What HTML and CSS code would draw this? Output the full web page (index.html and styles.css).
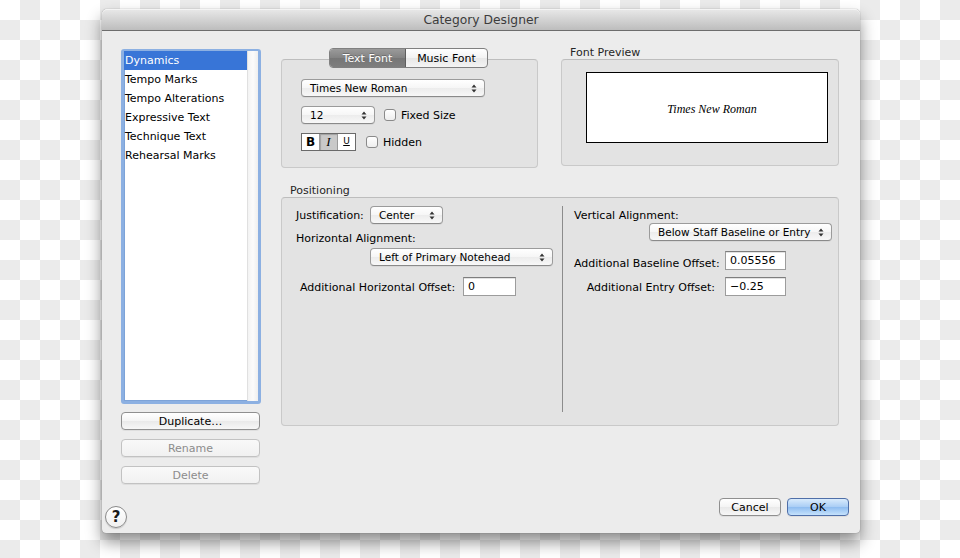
FILE: index.html
```html
<!DOCTYPE html>
<html>
<head>
<meta charset="utf-8">
<title>Category Designer</title>
<link rel="stylesheet" href="styles.css">
</head>
<body>
<div class="window">
  <div class="titlebar">Category Designer</div>
  <div class="content">
    <div class="leftcol">
      <div class="list">
        <div class="rows">
          <div class="row sel">Dynamics</div>
          <div class="row">Tempo Marks</div>
          <div class="row">Tempo Alterations</div>
          <div class="row">Expressive Text</div>
          <div class="row">Technique Text</div>
          <div class="row">Rehearsal Marks</div>
        </div>
        <div class="scroll"></div>
      </div>
      <div class="btn side">Duplicate…</div>
      <div class="btn side disabled">Rename</div>
      <div class="btn side disabled">Delete</div>
    </div>
    <div class="rightcol">
      <div class="toprow">
        <div class="textgrp">
          <div class="tabs"><span class="tab on">Text Font</span><span class="tab">Music Font</span></div>
          <div class="box textbox">
            <div class="ctl-row">
              <div class="popup w-font"><span class="ptxt">Times New Roman</span><svg class="arr" width="6" height="9" viewBox="0 0 6 9"><path d="M3 0.5 L5.5 3.5 H0.5 Z M3 8.5 L5.5 5.5 H0.5 Z" fill="#333"/></svg></div>
            </div>
            <div class="ctl-row">
              <div class="popup w-size"><span class="ptxt">12</span><svg class="arr" width="6" height="9" viewBox="0 0 6 9"><path d="M3 0.5 L5.5 3.5 H0.5 Z M3 8.5 L5.5 5.5 H0.5 Z" fill="#333"/></svg></div>
              <div class="check gap9"><span class="cb"></span><span class="ctxt">Fixed Size</span></div>
            </div>
            <div class="ctl-row">
              <div class="biu"><span class="seg b">B</span><span class="seg i on">I</span><span class="seg u">U</span></div>
              <div class="check gap10"><span class="cb"></span><span class="ctxt">Hidden</span></div>
            </div>
          </div>
        </div>
        <div class="prevgrp">
          <div class="grplabel">Font Preview</div>
          <div class="box prevbox">
            <div class="preview">Times New Roman</div>
          </div>
        </div>
      </div>
      <div class="posgrp">
        <div class="grplabel">Positioning</div>
        <div class="box posbox">
          <div class="pos-left">
            <div class="prow r-just">
              <span class="lbl just-lbl">Justification:</span>
              <div class="popup w-just"><span class="ptxt">Center</span><svg class="arr" width="6" height="9" viewBox="0 0 6 9"><path d="M3 0.5 L5.5 3.5 H0.5 Z M3 8.5 L5.5 5.5 H0.5 Z" fill="#333"/></svg></div>
            </div>
            <div class="lbl r-halign">Horizontal Alignment:</div>
            <div class="popup w-wide r-hpop"><span class="ptxt">Left of Primary Notehead</span><svg class="arr" width="6" height="9" viewBox="0 0 6 9"><path d="M3 0.5 L5.5 3.5 H0.5 Z M3 8.5 L5.5 5.5 H0.5 Z" fill="#333"/></svg></div>
            <div class="prow r-hoff">
              <span class="lbl hoff-lbl">Additional Horizontal Offset:</span>
              <div class="field w-hoff">0</div>
            </div>
          </div>
          <div class="divider"></div>
          <div class="pos-right">
            <div class="lbl">Vertical Alignment:</div>
            <div class="popup w-wide r-vpop"><span class="ptxt">Below Staff Baseline or Entry</span><svg class="arr" width="6" height="9" viewBox="0 0 6 9"><path d="M3 0.5 L5.5 3.5 H0.5 Z M3 8.5 L5.5 5.5 H0.5 Z" fill="#333"/></svg></div>
            <div class="prow r-base">
              <span class="lbl voff-lbl base-lbl">Additional Baseline Offset:</span>
              <div class="field w-voff">0.05556</div>
            </div>
            <div class="prow r-entry">
              <span class="lbl voff-lbl">Additional Entry Offset:</span>
              <div class="field w-voff">&minus;0.25</div>
            </div>
          </div>
        </div>
      </div>
    </div>
  </div>
  <div class="footer">
    <div class="help">?</div>
    <div class="actions">
      <div class="btn foot">Cancel</div>
      <div class="btn foot ok">OK</div>
    </div>
  </div>
</div>
</body>
</html>
```

FILE: styles.css
```css
html, body {
  margin: 0;
  padding: 0;
}
body {
  width: 960px;
  height: 558px;
  overflow: hidden;
  background: repeating-conic-gradient(#ebebeb 0 25%, #ffffff 0 50%) 0 0 / 40px 40px;
  font-family: "DejaVu Sans", "Noto Sans", sans-serif;
  font-size: 11px;
  color: #000;
}
.window {
  width: 758px;
  height: 524px;
  margin: 9px 0 0 102px;
  background: #ececec;
  border-radius: 5px 5px 4px 4px;
  box-shadow: 0 9px 16px rgba(0,0,0,0.45), 0 0 1px rgba(0,0,0,0.5);
  display: flex;
  flex-direction: column;
  overflow: hidden;
}
.titlebar {
  height: 21px;
  line-height: 23px;
  text-align: center;
  font-size: 12.3px;
  color: #3c3c3c;
  background: linear-gradient(#e9e9e9, #d3d3d3 50%, #bdbdbd);
  border-bottom: 1px solid #6d6d6d;
  box-shadow: inset 0 1px 0 #f4f4f4;
  border-radius: 5px 5px 0 0;
}
.content {
  flex: 1;
  display: flex;
  gap: 20px;
  padding: 0 21px 0 19px;
}
.leftcol {
  width: 140px;
  padding-top: 18px;
  display: flex;
  flex-direction: column;
}
.list {
  height: 350px;
  border: 3px solid #8cb0e2;
  border-top-width: 2px;
  border-radius: 3px;
  background: #fff;
  display: flex;
  box-shadow: inset 0 0 0 1px #7da3d8;
}
.rows {
  flex: 1;
}
.row {
  height: 19px;
  line-height: 19px;
  padding-left: 1px;
  white-space: nowrap;
}
.row.sel {
  background: #3875d7;
  color: #fff;
}
.scroll {
  width: 10px;
  border-left: 1px solid #e0e0e0;
  background: linear-gradient(90deg, #f3f3f3, #fbfbfb 50%, #eeeeee);
}
.btn {
  box-sizing: border-box;
  height: 18px;
  line-height: 18px;
  text-align: center;
  border: 1px solid #8f8f8f;
  border-radius: 4px;
  background: linear-gradient(#ffffff, #f4f4f4 50%, #e9e9e9 51%, #f7f7f7);
  box-shadow: 0 1px 0 rgba(0,0,0,0.06);
}
.btn.side {
  width: 139px;
  margin-top: 9px;
}
.list + .btn.side {
  margin-top: 8px;
}
.btn.disabled {
  color: #8c8c8c;
  border-color: #c2c2c2;
  background: linear-gradient(#f9f9f9, #f1f1f1);
}
.rightcol {
  width: 558px;
  padding-top: 17px;
}
.toprow {
  display: flex;
  gap: 23px;
  align-items: flex-start;
}
.textgrp {
  width: 257px;
  display: flex;
  flex-direction: column;
}
.tabs {
  align-self: center;
  margin-left: -2px;
  position: relative;
  z-index: 1;
  display: flex;
  height: 20px;
  box-sizing: border-box;
  border: 1px solid #808080;
  border-radius: 4px;
  overflow: hidden;
  margin-bottom: -9px;
  background: linear-gradient(#ffffff, #f2f2f2 50%, #e7e7e7 51%, #f4f4f4);
}
.tab {
  line-height: 20px;
  text-align: center;
  width: 81px;
}
.tab.on {
  width: 75px;
  color: #fff;
  background: linear-gradient(#9a9a9a, #838383 50%, #767676 51%, #7e7e7e);
  border-right: 1px solid #5e5e5e;
  text-shadow: 0 -1px 0 rgba(0,0,0,0.25);
}
.box {
  box-sizing: border-box;
  background: #e3e3e3;
  border: 1px solid #c9c9c9;
  border-top-color: #bdbdbd;
  border-radius: 4px;
}
.textbox {
  height: 109px;
  padding: 19px 0 0 19px;
}
.ctl-row {
  display: flex;
  align-items: center;
  height: 18px;
  margin-bottom: 9px;
}
.popup {
  box-sizing: border-box;
  height: 18px;
  padding-left: 8px;
  border: 1px solid #9b9b9b;
  border-bottom-color: #8a8a8a;
  border-radius: 4px;
  background: linear-gradient(#ffffff, #f6f6f6 50%, #ececec 51%, #f8f8f8);
  box-shadow: 0 1px 0 rgba(0,0,0,0.05);
  display: flex;
  align-items: center;
  white-space: nowrap;
  font-size: 10.5px;
}
.ptxt {
  line-height: 13px;
  padding-top: 1px;
}
.popup .arr {
  margin-left: auto;
  margin-right: 7px;
}
.w-font { width: 184px; }
.w-size { width: 74px; }
.w-just { width: 73px; }
.w-wide { width: 183px; }
.check {
  display: flex;
  align-items: center;
}
.ctxt {
  padding-top: 1px;
}
.gap9 { margin-left: 9px; }
.gap10 { margin-left: 10px; }
.cb {
  width: 12px;
  height: 12px;
  box-sizing: border-box;
  border: 1px solid #8a8a8a;
  border-radius: 3px;
  background: linear-gradient(#ffffff, #eeeeee);
  margin-right: 5px;
}
.biu {
  display: flex;
  height: 18px;
  box-sizing: border-box;
  border: 1px solid #6a6a6a;
  background: #fff;
}
.seg {
  width: 17px;
  text-align: center;
  line-height: 16px;
  border-right: 1px solid #9a9a9a;
}
.seg:last-child { border-right: 0; }
.seg.b {
  font-weight: bold;
  font-size: 12px;
}
.seg.i {
  font-family: "Liberation Serif", serif;
  font-style: italic;
  font-size: 13px;
  background: #c9c9c9;
  box-shadow: inset 1px 1px 1px rgba(0,0,0,0.2);
}
.seg.u {
  text-decoration: underline;
  font-size: 9px;
  line-height: 14px;
}
.prevgrp {
  width: 278px;
  margin-top: -2px;
}
.grplabel {
  height: 13px;
  line-height: 13px;
  padding-left: 9px;
  color: #262626;
}
.prevbox {
  height: 107px;
  padding: 12px 10px 0 24px;
}
.preview {
  width: 242px;
  height: 71px;
  box-sizing: border-box;
  border: 1px solid #000;
  background: #fff;
  display: flex;
  align-items: center;
  justify-content: center;
  font-family: "Liberation Serif", "Times New Roman", serif;
  font-style: italic;
  font-size: 12px;
  padding: 3px 0 0 10px;
}
.posgrp {
  margin-top: 16px;
}
.posbox {
  height: 229px;
  display: flex;
}
.pos-left {
  width: 280px;
  padding: 8px 0 0 14px;
  box-sizing: border-box;
}
.prow {
  display: flex;
  align-items: center;
}
.lbl {
  line-height: 13px;
  white-space: nowrap;
}
.just-lbl {
  width: 74px;
}
.r-just { height: 18px; }
.r-halign { margin-top: 8px; }
.r-hpop { margin: 3px 0 0 74px; }
.r-hoff {
  margin-top: 11px;
  height: 19px;
  padding-left: 4px;
}
.hoff-lbl {
  width: 153px;
  text-align: right;
  margin-right: 10px;
  padding-top: 2px;
}
.field {
  box-sizing: border-box;
  height: 19px;
  line-height: 17px;
  padding-left: 4px;
  background: #fff;
  border: 1px solid #9c9c9c;
  border-top-color: #7e7e7e;
  box-shadow: inset 0 1px 0 #e2e2e2;
}
.w-hoff { width: 53px; }
.w-voff { width: 61px; }
.divider {
  width: 1px;
  background: #8c8c8c;
  margin: 8px 0 13px;
}
.pos-right {
  flex: 1;
  padding: 11px 0 0 11px;
}
.r-vpop { margin: 1px 0 0 75px; }
.r-base {
  margin-top: 10px;
  height: 19px;
}
.r-entry {
  margin-top: 7px;
  height: 19px;
}
.voff-lbl {
  width: 141px;
  text-align: right;
  margin-right: 10px;
  padding-top: 2px;
}
.base-lbl {
  padding-top: 6px;
}
.footer {
  height: 35px;
  display: flex;
  align-items: flex-start;
  padding: 0 11px 0 3px;
}
.help {
  width: 22px;
  height: 22px;
  box-sizing: border-box;
  border: 1px solid #8a8a8a;
  border-radius: 50%;
  background: linear-gradient(#ffffff, #f0f0f0);
  text-align: center;
  line-height: 21px;
  font-weight: bold;
  font-size: 15px;
  color: #1a1a1a;
  margin-top: 8px;
  box-shadow: 0 1px 1px rgba(0,0,0,0.15);
}
.actions {
  margin-left: auto;
  display: flex;
  gap: 6px;
}
.btn.foot {
  width: 62px;
}
.btn.ok {
  border-color: #4f6fa8;
  background: linear-gradient(#d9ebfc, #a9cdf5 50%, #8ebcf0 51%, #c5e2fc);
}
```
